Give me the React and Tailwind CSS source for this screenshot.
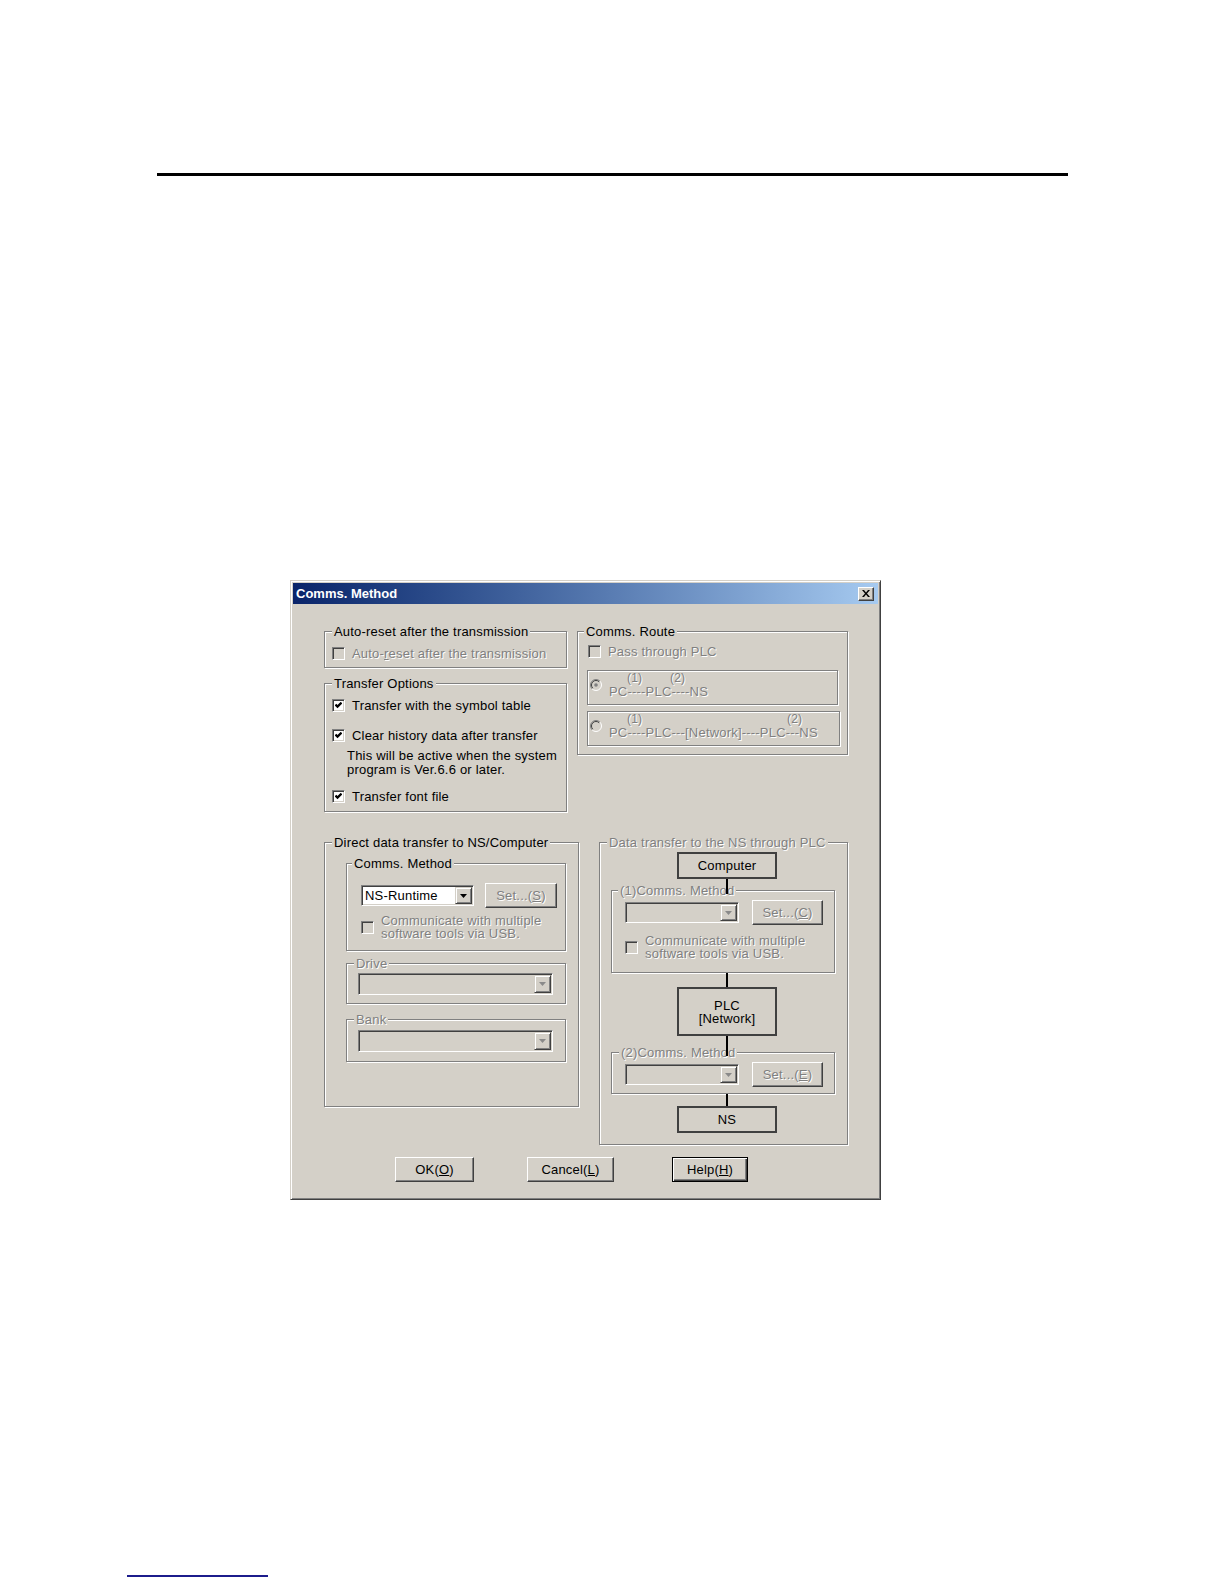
import React from 'react';

// classic win9x look
const DIS = 'text-[#808080] [text-shadow:1px_1px_0_#ffffff]';
const ETCH = 'border border-[#808080] shadow-[1px_1px_0_#ffffff,inset_1px_1px_0_#ffffff]';
const SUNKEN = 'border border-t-[#808080] border-l-[#808080] border-r-white border-b-white shadow-[inset_1px_1px_0_#404040,inset_-1px_-1px_0_#d4d0c8]';
const RAISED = 'border border-t-white border-l-white border-r-[#404040] border-b-[#404040] shadow-[inset_-1px_-1px_0_#808080]';

function Group({ label, disabled, className = '', legend = 'ml-[7px]', children }) {
  return (
    <div className={`${ETCH} ${className}`}>
      <div className={`-mt-[8px] ${legend} px-[2px] h-[15px] leading-[15px] w-fit bg-[#d4d0c8] whitespace-nowrap ${disabled ? DIS : 'text-black'}`}>
        {label}
      </div>
      {children}
    </div>
  );
}

function Check({ checked, disabled }) {
  return (
    <span className={`flex items-center justify-center w-[13px] h-[13px] shrink-0 ${SUNKEN} ${disabled ? 'bg-[#d4d0c8]' : 'bg-white'}`}>
      {checked && (
        <svg width="7" height="7" viewBox="0 0 7 7">
          <path d="M0.5 2.6 L2.5 4.6 L6.5 0.6" stroke="#000" strokeWidth="2.2" fill="none" />
        </svg>
      )}
    </span>
  );
}

function Radio({ checked }) {
  return (
    <svg width="12" height="12" viewBox="0 0 12 12" className="shrink-0">
      <circle cx="6" cy="6" r="5.5" fill="#d4d0c8" />
      <path d="M2.1 9.9 A5.5 5.5 0 0 1 9.9 2.1" stroke="#808080" fill="none" />
      <path d="M9.9 2.1 A5.5 5.5 0 0 1 2.1 9.9" stroke="#ffffff" fill="none" />
      <path d="M2.8 9.2 A4.5 4.5 0 0 1 9.2 2.8" stroke="#404040" fill="none" />
      {checked && <circle cx="6" cy="6" r="1.8" fill="#808080" />}
    </svg>
  );
}

function Btn({ className = '', children, disabled, def }) {
  return (
    <div
      className={`${className} h-[25px] flex items-center justify-center bg-[#d4d0c8] ${
        def ? 'border border-black shadow-[inset_1px_1px_0_#ffffff,inset_-1px_-1px_0_#404040,inset_-2px_-2px_0_#808080]' : RAISED
      } ${disabled ? DIS : 'text-black'}`}
    >
      {children}
    </div>
  );
}

function Combo({ className = '', value, disabled }) {
  return (
    <div className={`${className} flex p-[1px] ${SUNKEN} ${disabled ? 'bg-[#d4d0c8]' : 'bg-white'}`}>
      <div className="flex-1 flex items-center pl-[2px] text-black">{value}</div>
      <div className="w-[17px] h-full flex items-center justify-center bg-[#d4d0c8] border border-t-[#d4d0c8] border-l-[#d4d0c8] border-r-[#404040] border-b-[#404040] shadow-[inset_1px_1px_0_#ffffff,inset_-1px_-1px_0_#808080]">
        <svg width="7" height="4" viewBox="0 0 7 4">
          <path d="M0 0h7L3.5 4z" fill={disabled ? '#8a8a8a' : '#000'} />
        </svg>
      </div>
    </div>
  );
}

function CheckRow({ checked, disabled, className = '', children }) {
  return (
    <div className={`flex items-center h-[15px] ${className}`}>
      <Check checked={checked} disabled={disabled} />
      <span className={`ml-[7px] whitespace-nowrap ${disabled ? DIS : 'text-black'}`}>{children}</span>
    </div>
  );
}

function UsbRow({ className = '' }) {
  return (
    <div className={`flex items-center ${className}`}>
      <Check disabled />
      <div className={`ml-[7px] leading-[13px] ${DIS}`}>
        <div>Communicate with multiple</div>
        <div>software tools via USB.</div>
      </div>
    </div>
  );
}

const Box = ({ className = '', children }) => (
  <div className={`w-[100px] border-2 border-[#404040] flex flex-col items-center justify-center leading-[13px] text-black ${className}`}>
    {children}
  </div>
);

const Wire = ({ className = '' }) => <div className={`ml-[126px] w-[2px] bg-black relative z-10 ${className}`} />;

export default function App() {
  return (
    <div className="min-h-[1584px] bg-white font-['Liberation_Sans',Arial,sans-serif] text-[13px] tracking-[0.2px] text-black flex flex-col">
      <div className="mt-[173px] ml-[157px] w-[911px] h-[3px] bg-black" />

      {/* dialog window */}
      <div className="mt-[404px] ml-[290px] w-[591px] bg-[#d4d0c8] border border-t-[#d4d0c8] border-l-[#d4d0c8] border-r-[#404040] border-b-[#404040] shadow-[inset_1px_1px_0_#ffffff,inset_-1px_-1px_0_#808080] p-[2px]">
        <div className="h-[21px] flex items-center justify-between bg-linear-to-r from-[#0a246a] to-[#a6caf0] pl-[3px] pr-[4px]">
          <span className="text-white font-bold tracking-normal">Comms. Method</span>
          <div className={`w-[16px] h-[14px] flex items-center justify-center bg-[#d4d0c8] ${RAISED}`}>
            <svg width="8" height="7" viewBox="0 0 8 7">
              <path d="M0 0h2l2 2.4L6 0h2L5 3.5 8 7H6L4 4.6 2 7H0l3-3.5z" fill="#000" />
            </svg>
          </div>
        </div>

        <div className="pt-[27px] pl-[31px]">
          {/* top row */}
          <div className="flex items-start">
            <div className="w-[243px]">
              <Group label="Auto-reset after the transmission" className="h-[37px]">
                <CheckRow disabled className="mt-[7px] pl-[7px]">
                  Auto-<span className="underline">r</span>eset after the transmission
                </CheckRow>
              </Group>
              <Group label="Transfer Options" className="mt-[15px] h-[129px]">
                <CheckRow checked className="mt-[7px] pl-[7px]">Transfer with the symbol table</CheckRow>
                <CheckRow checked className="mt-[15px] pl-[7px]">Clear history data after transfer</CheckRow>
                <div className="mt-[6px] pl-[22px] leading-[14px]">
                  <div>This will be active when the system</div>
                  <div>program is Ver.6.6 or later.</div>
                </div>
                <CheckRow checked className="mt-[12px] pl-[7px]">Transfer font file</CheckRow>
              </Group>
            </div>

            <Group label="Comms. Route" legend="ml-[6px]" className="ml-[10px] w-[271px] h-[124px]">
              <CheckRow disabled className="mt-[5px] pl-[10px]">Pass through PLC</CheckRow>
              <div className={`mt-[11px] ml-[9px] w-[251px] h-[35px] ${ETCH} flex items-start pt-[1px]`}>
                <div className="mt-[7px] ml-[2px]"><Radio checked /></div>
                <div className={`ml-[7px] leading-[13px] ${DIS}`}>
                  <div className="flex text-[12px]">
                    <span className="ml-[18px] w-[15px]">(1)</span>
                    <span className="ml-[28px]">(2)</span>
                  </div>
                  <div>PC----PLC----NS</div>
                </div>
              </div>
              <div className={`mt-[6px] ml-[9px] w-[253px] h-[35px] ${ETCH} flex items-start pt-[1px]`}>
                <div className="mt-[7px] ml-[2px]"><Radio /></div>
                <div className={`ml-[7px] leading-[13px] ${DIS}`}>
                  <div className="flex text-[12px]">
                    <span className="ml-[18px] w-[15px]">(1)</span>
                    <span className="ml-[145px]">(2)</span>
                  </div>
                  <div>PC----PLC---[Network]----PLC---NS</div>
                </div>
              </div>
            </Group>
          </div>

          {/* bottom row */}
          <div className="mt-[30px] flex items-start">
            <Group label="Direct data transfer to NS/Computer" className="w-[255px] h-[265px]">
              <Group label="Comms. Method" legend="ml-[5px]" className="mt-[13px] ml-[21px] w-[220px] h-[88px]">
                <div className="mt-[12px] h-[25px] flex items-center pl-[14px]">
                  <Combo className="w-[113px] h-[21px]" value="NS-Runtime" />
                  <Btn disabled className="ml-[11px] w-[72px]">
                    Set...(<span className="underline">S</span>)
                  </Btn>
                </div>
                <UsbRow className="mt-[6px] pl-[14px]" />
              </Group>
              <Group label="Drive" disabled className="mt-[12px] ml-[21px] w-[220px] h-[41px]">
                <Combo disabled className="mt-[2px] ml-[11px] w-[195px] h-[22px]" />
              </Group>
              <Group label="Bank" disabled className="mt-[15px] ml-[21px] w-[220px] h-[43px]">
                <Combo disabled className="mt-[3px] ml-[11px] w-[195px] h-[22px]" />
              </Group>
            </Group>

            <Group label="Data transfer to the NS through PLC" disabled className="ml-[20px] w-[249px] h-[303px] flex flex-col items-start">
              <Box className="mt-[2px] ml-[77px] h-[27px]">Computer</Box>
              <Wire className="h-[15px]" />
              <Group label="(1)Comms. Method" disabled legend="ml-[6px]" className="-mt-[4px] ml-[11px] w-[224px] h-[83px]">
                <div className="mt-[2px] h-[25px] flex items-center pl-[13px]">
                  <Combo disabled className="w-[114px] h-[21px]" />
                  <Btn disabled className="ml-[13px] w-[71px]">
                    Set...(<span className="underline">C</span>)
                  </Btn>
                </div>
                <UsbRow className="mt-[9px] pl-[13px]" />
              </Group>
              <Wire className="h-[14px]" />
              <Box className="ml-[77px] h-[49px]">
                <div>PLC</div>
                <div>[Network]</div>
              </Box>
              <Wire className="h-[20px]" />
              <Group label="(2)Comms. Method" disabled legend="ml-[7px]" className="-mt-[4px] ml-[11px] w-[224px] h-[42px]">
                <div className="mt-[2px] h-[25px] flex items-center pl-[13px]">
                  <Combo disabled className="w-[114px] h-[21px]" />
                  <Btn disabled className="ml-[13px] w-[71px]">
                    Set...(<span className="underline">E</span>)
                  </Btn>
                </div>
              </Group>
              <Wire className="h-[12px]" />
              <Box className="ml-[77px] h-[27px]">NS</Box>
            </Group>
          </div>
        </div>

        <div className="mt-[12px] pl-[102px] pb-[15px] flex">
          <Btn className="w-[79px]">
            OK(<span className="underline">O</span>)
          </Btn>
          <Btn className="ml-[53px] w-[87px]">
            Cancel(<span className="underline">L</span>)
          </Btn>
          <Btn def className="ml-[58px] w-[76px]">
            Help(<span className="underline">H</span>)
          </Btn>
        </div>
      </div>

      <div className="mt-[375px] ml-[127px] w-[141px] h-[2px] bg-[#1c1c8c]" />
    </div>
  );
}
